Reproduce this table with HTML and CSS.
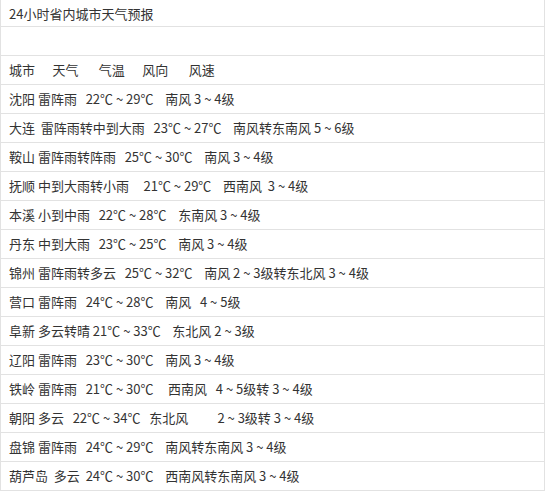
FILE: index.html
```html
<!DOCTYPE html>
<html lang="zh-CN">
<head>
<meta charset="utf-8">
<title>24小时省内城市天气预报</title>
<link rel="stylesheet" href="styles.css">
</head>
<body>
<div class="forecast">
  <div class="row title">24小时省内城市天气预报</div>
  <div class="row"></div>
  <div class="row">城市      天气       气温      风向       风速</div>
  <div class="row">沈阳 雷阵雨   22℃ ~ 29℃    南风 3 ~ 4级</div>
  <div class="row">大连  雷阵雨转中到大雨   23℃ ~ 27℃    南风转东南风 5 ~ 6级</div>
  <div class="row">鞍山 雷阵雨转阵雨   25℃ ~ 30℃    南风 3 ~ 4级</div>
  <div class="row">抚顺 中到大雨转小雨     21℃ ~ 29℃    西南风  3 ~ 4级</div>
  <div class="row">本溪 小到中雨   22℃ ~ 28℃    东南风 3 ~ 4级</div>
  <div class="row">丹东 中到大雨   23℃ ~ 25℃    南风 3 ~ 4级</div>
  <div class="row">锦州 雷阵雨转多云   25℃ ~ 32℃    南风 2 ~ 3级转东北风 3 ~ 4级</div>
  <div class="row">营口 雷阵雨   24℃ ~ 28℃    南风   4 ~ 5级</div>
  <div class="row">阜新 多云转晴 21℃ ~ 33℃    东北风 2 ~ 3级</div>
  <div class="row">辽阳 雷阵雨   23℃ ~ 30℃    南风 3 ~ 4级</div>
  <div class="row">铁岭 雷阵雨   21℃ ~ 30℃     西南风   4 ~ 5级转 3 ~ 4级</div>
  <div class="row">朝阳 多云   22℃ ~ 34℃   东北风          2 ~ 3级转 3 ~ 4级</div>
  <div class="row">盘锦 雷阵雨   24℃ ~ 29℃    南风转东南风 3 ~ 4级</div>
  <div class="row">葫芦岛  多云  24℃ ~ 30℃    西南风转东南风 3 ~ 4级</div>
</div>
</body>
</html>
```
FILE: styles.css
```css
html, body {
  margin: 0;
  padding: 0;
  background: #ffffff;
}

.forecast {
  width: 545px;
  box-sizing: border-box;
  border-left: 1px solid #e2e2e2;
  border-right: 1px solid #e2e2e2;
  font-family: "Noto Sans CJK SC", "Noto Sans", sans-serif;
  font-size: 13px;
  color: #333333;
}

.row {
  height: 28px;
  line-height: 28px;
  padding: 0 8px;
  border-bottom: 1px solid #e2e2e2;
  white-space: pre;
}

.row.title {
  height: 26px;
  line-height: 28px;
}
```
